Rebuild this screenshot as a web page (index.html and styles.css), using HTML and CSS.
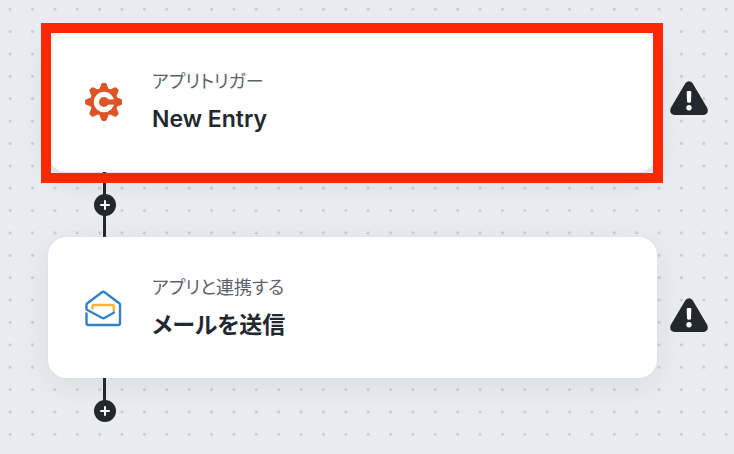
FILE: index.html
```html
<!DOCTYPE html>
<html lang="ja">
  <head>
    <meta charset="UTF-8" />
    <meta name="viewport" content="width=device-width, initial-scale=1.0" />
    <title>New Entry</title>
    <link rel="stylesheet" href="styles.css">
  </head>
  <body>
    <main class="canvas">
      <section class="flow">
        <article class="node is-selected">
          <svg class="logo" viewBox="-1 0 38 38" aria-hidden="true">
            <g fill="#dc5427">
              <circle cx="19" cy="19" r="13.900" />
              <path id="tooth" d="M14 7 16.200 1.400Q16.700 .100 17.800 .100H20.200Q21.300 .100 21.800 1.400L24 7Z" />
              <use href="#tooth" transform="rotate(45 19 19)" />
              <use href="#tooth" transform="rotate(90 19 19)" />
              <use href="#tooth" transform="rotate(135 19 19)" />
              <use href="#tooth" transform="rotate(180 19 19)" />
              <use href="#tooth" transform="rotate(225 19 19)" />
              <use href="#tooth" transform="rotate(270 19 19)" />
              <use href="#tooth" transform="rotate(315 19 19)" />
            </g>
            <circle cx="19" cy="19" r="10.300" fill="#fff" />
            <circle cx="19" cy="19" r="5" fill="#dc5427" />
            <path d="M19 16.400H32V21.600H19Z" fill="#dc5427" />
          </svg>
          <div class="info">
            <p>アプリトリガー</p>
            <h2>New Entry</h2>
          </div>
        </article>

        <div class="connector">
          <button class="add" aria-label="add">
            <svg viewBox="0 0 22 22"><path d="M11 7V15M7 11H15" /></svg>
          </button>
        </div>

        <article class="node">
          <svg class="logo" viewBox="0 0 38 38" fill="none" stroke-width="2.4" stroke-linejoin="round" stroke-linecap="round" aria-hidden="true">
            <path d="M8.500 19.500V17.500Q8.500 16 10 16H28Q29.800 16 29.800 17.800V22.500" stroke="#f9b338" />
            <path d="M2.500 24.500V34Q2.500 36 4.500 36H34Q36 36 36 34V15.800Q36 14.800 35.200 14.200L20.600 3.300Q19.300 2.300 18 3.300L3.300 14.200Q2.500 14.800 2.500 15.800V20.500L18.300 29Q19.300 29.600 20.300 29L29.800 23.800" stroke="#3482c6" />
          </svg>
          <div class="info">
            <p>アプリと連携する</p>
            <h2>メールを送信</h2>
          </div>
        </article>

        <div class="connector is-last">
          <button class="add" aria-label="add">
            <svg viewBox="0 0 22 22"><path d="M11 7V15M7 11H15" /></svg>
          </button>
        </div>
      </section>

      <aside class="warnings">
        <svg class="warning" viewBox="0 0 38 34" role="img" aria-label="warning">
          <path d="M15.500 2Q19 -1.500 22.500 2L37 26.500Q39.500 32.500 34 34H4Q-1.500 32.500 1 26.500Z" fill="#23282f" />
          <path d="M16.700 11Q16.700 10 17.700 10H20.300Q21.300 10 21.300 11L21 20.500Q20.800 21.700 19 21.700T17 20.500Z" fill="#fff" />
          <circle cx="19" cy="26.700" r="2.700" fill="#fff" />
        </svg>
        <svg class="warning" viewBox="0 0 38 34" role="img" aria-label="warning">
          <path d="M15.500 2Q19 -1.500 22.500 2L37 26.500Q39.500 32.500 34 34H4Q-1.500 32.500 1 26.500Z" fill="#23282f" />
          <path d="M16.700 11Q16.700 10 17.700 10H20.300Q21.300 10 21.300 11L21 20.500Q20.800 21.700 19 21.700T17 20.500Z" fill="#fff" />
          <circle cx="19" cy="26.700" r="2.700" fill="#fff" />
        </svg>
      </aside>
    </main>
  </body>
</html>
```
FILE: styles.css
```css
*,
*::before,
*::after {
  box-sizing: border-box;
  margin: 0;
  padding: 0;
}
body {
  min-height: 100vh;
  font-family: Inter, "Noto Sans CJK JP", sans-serif;
  font-feature-settings: "palt";
  color: #23282f;
  background-color: #e9ecf1;
  /* 8 x 8 dots per tile */
  background-image: url("data:image/svg+xml,%3Csvg xmlns='http://www.w3.org/2000/svg' width='179' height='179' viewBox='0 0 8 8'%3E%3Cpath d='M.5 .5H8M.5 1.5H8M.5 2.5H8M.5 3.5H8M.5 4.5H8M.5 5.5H8M.5 6.5H8M.5 7.5H8' stroke='%23cdd1d6' stroke-width='.15' stroke-linecap='round' stroke-dasharray='0 1'/%3E%3C/svg%3E");
  background-position: -1px -2px;
}
.canvas {
  display: flex;
  gap: 13px;
  padding: 0 26px 0 48px;
}
.flow {
  flex: 1;
  padding-top: 31px;
}
.node {
  position: relative;
  display: flex;
  align-items: center;
  gap: 30px;
  padding: 36px;
  border-radius: 18px;
  background-color: #fff;
  box-shadow: 0 0 1px #c8cdd3, 0 8px 32px rgba(35, 50, 50, 0.08);

  /* highlight frame around the card */
  &.is-selected::after {
    content: "";
    position: absolute;
    z-index: 1;
    inset: -8px -6px -11px -7px;
    border: 10px solid #ff2600;
  }
}
.logo {
  width: 38px;
  height: 38px;
}
.info {
  padding-bottom: 2px;

  & p {
    font-size: 18px;
    line-height: 30px;
    color: #59616d;
  }
  & h2 {
    font-size: 23px;
    font-weight: 600;
    line-height: 30px;
    margin-top: 7px;
  }
}
.connector {
  position: relative;
  display: flex;
  align-items: center;
  width: 22px;
  height: 65px;
  margin-left: 46px;
  background: linear-gradient(#23282f, #23282f) 9px 0 / 3px 100% no-repeat;

  &.is-last {
    align-items: flex-end;
    height: 44px;
    background-size: 3px 30px;
  }
}
.add {
  width: 22px;
  height: 22px;
  border: none;
  border-radius: 50%;
  background-color: #23282f;
  cursor: pointer;

  & svg {
    display: block;
    stroke: #fff;
    stroke-width: 2;
    stroke-linecap: round;
  }
}
.warnings {
  display: flex;
  flex-direction: column;
  gap: 183px;
  padding-top: 81px;
}
.warning {
  width: 38px;
  height: 34px;
}
```
